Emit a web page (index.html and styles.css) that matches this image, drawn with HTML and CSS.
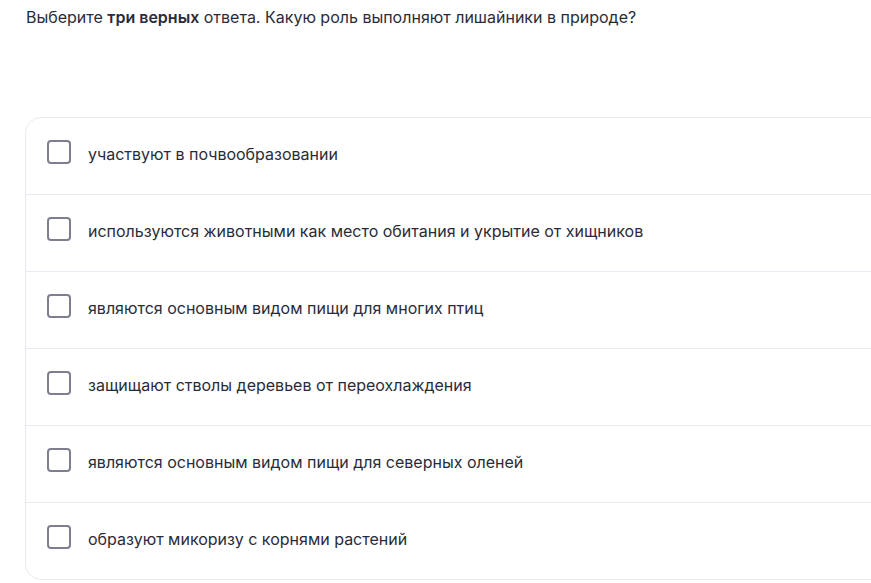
FILE: index.html
```html
<!DOCTYPE html>
<html lang="ru">
<head>
<meta charset="utf-8">
<title>Вопрос</title>
<link rel="stylesheet" href="styles.css">
</head>
<body>
<main class="quiz">
  <p class="quiz-question">Выберите <b>три верных</b> ответа. Какую роль выполняют лишайники в природе?</p>
  <ul class="options">
    <li class="option"><span class="checkbox"></span><span class="option-text">участвуют в почвообразовании</span></li>
    <li class="option"><span class="checkbox"></span><span class="option-text">используются животными как место обитания и укрытие от хищников</span></li>
    <li class="option"><span class="checkbox"></span><span class="option-text">являются основным видом пищи для многих птиц</span></li>
    <li class="option"><span class="checkbox"></span><span class="option-text">защищают стволы деревьев от переохлаждения</span></li>
    <li class="option"><span class="checkbox"></span><span class="option-text">являются основным видом пищи для северных оленей</span></li>
    <li class="option"><span class="checkbox"></span><span class="option-text">образуют микоризу с корнями растений</span></li>
  </ul>
</main>
</body>
</html>
```

FILE: styles.css
```css
html, body {
  margin: 0;
  padding: 0;
  background: #ffffff;
  overflow: hidden;
}

.quiz {
  padding: 5px 0 0 26px;
  font-family: Inter, "Noto Sans", sans-serif;
  color: #2a2b3a;
}

.quiz-question {
  margin: 0;
  font-size: 16px;
  line-height: 24px;
}

.quiz-question b {
  font-weight: 600;
}

.options {
  list-style: none;
  margin: 88px 0 0 -1px;
  padding: 0;
  width: 900px;
  border: 1px solid #e9eaf1;
  border-radius: 16px;
}

.option {
  display: flex;
  align-items: center;
  height: 76px;
  padding-left: 21px;
  border-top: 1px solid #e9eaf1;
}

.option:first-child {
  border-top: none;
}

.checkbox {
  flex: none;
  width: 20px;
  height: 20px;
  border: 2px solid #7d7e90;
  border-radius: 4px;
  margin-bottom: 9px;
}

.option-text {
  margin-left: 17px;
  margin-bottom: 4px;
  font-size: 16px;
  line-height: 22px;
}
```
